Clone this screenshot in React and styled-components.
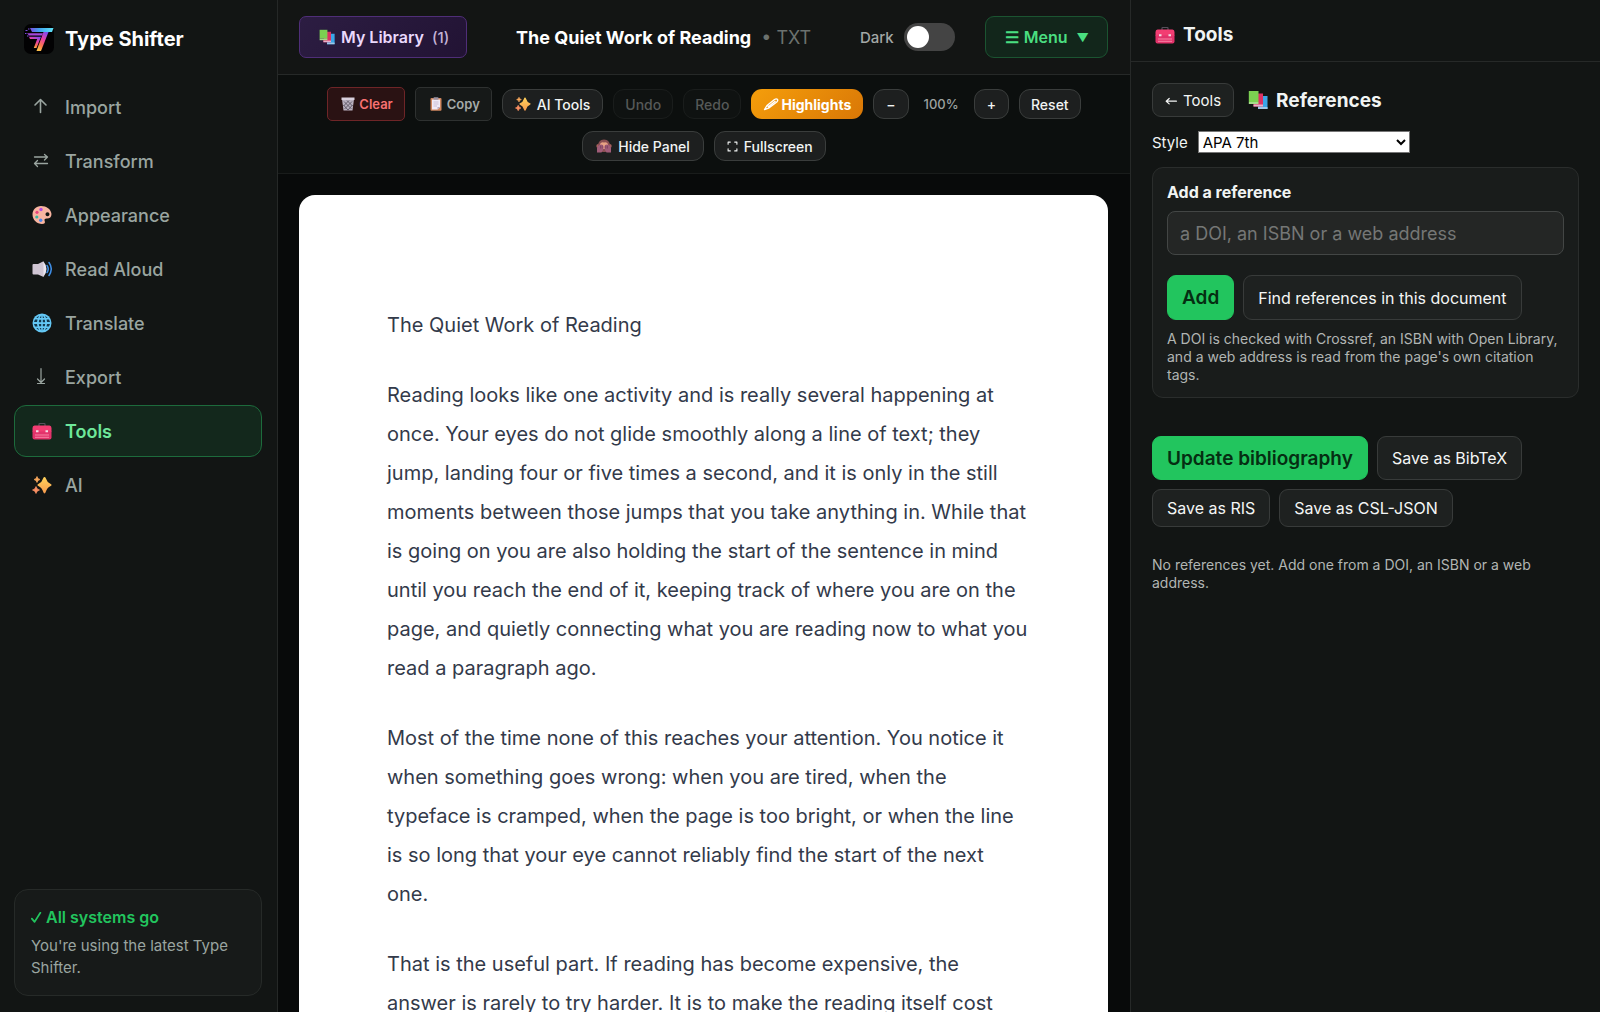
import React, { useState } from 'react';
import styled, { createGlobalStyle, css } from 'styled-components';

const GlobalStyle = createGlobalStyle`
  * {
    box-sizing: border-box;
  }
  body {
    margin: 0;
    background: #080a0a;
    color: #f1f4f3;
    font-family: Inter, "Liberation Sans", sans-serif;
  }
  button, input, select {
    font-family: inherit;
  }
  button {
    cursor: pointer;
  }
`;

const Shell = styled.div`
  display: grid;
  grid-template-columns: 278px minmax(0, 1fr) 470px;
  height: 100vh;
`;

const Svg = styled.svg`
  display: block;
  flex: none;
  width: ${(props) => props.$size || 20}px;
  height: ${(props) => props.$size || 20}px;
`;

/* Sidebar */

const Sidebar = styled.aside`
  display: flex;
  flex-direction: column;
  padding: 24px 15px 16px 14px;
  background: #121514;
  border-right: 1px solid #252827;
`;

const Brand = styled.div`
  display: flex;
  align-items: center;
  gap: 11px;
  padding-left: 10px;
  height: 30px;
  font-size: 20px;
  font-weight: 700;
  color: #ffffff;
`;

const Nav = styled.nav`
  display: flex;
  flex-direction: column;
  gap: 2px;
  margin-top: 27px;
`;

const NavLink = styled.a`
  display: flex;
  align-items: center;
  gap: 13px;
  height: 52px;
  padding: 0 17px;
  border: 1px solid ${(props) => (props.$active ? '#1d6b3c' : 'transparent')};
  border-radius: 12px;
  background: ${(props) => (props.$active ? '#13281c' : 'transparent')};
  color: ${(props) => (props.$active ? '#6ee79a' : '#9aa5a0')};
  font-size: 18px;
  font-weight: ${(props) => (props.$active ? 600 : 500)};
  text-decoration: none;
`;

const Status = styled.div`
  margin-top: auto;
  padding: 16px;
  border: 1px solid #262a28;
  border-radius: 14px;
  background: #171a19;
`;

const StatusTitle = styled.div`
  display: flex;
  align-items: center;
  gap: 4px;
  height: 22px;
  margin-bottom: 7px;
  color: #22c55e;
  font-size: 16px;
  font-weight: 600;
`;

const StatusText = styled.div`
  color: #9aa5a0;
  font-size: 15px;
  line-height: 22px;
`;

/* Reader column */

const Main = styled.main`
  display: flex;
  flex-direction: column;
  min-height: 0;
`;

const Header = styled.header`
  display: flex;
  align-items: center;
  justify-content: space-between;
  height: 75px;
  padding: 0 22px 0 21px;
  background: #131514;
  border-bottom: 1px solid #262928;
`;

const LibraryButton = styled.button`
  display: flex;
  align-items: center;
  gap: 6px;
  height: 42px;
  padding: 0 17px 0 19px;
  border: 1px solid #4f2e78;
  border-radius: 7px;
  background: linear-gradient(135deg, #2c1d42, #221334);
  color: #ead9fd;
  font-size: 16px;
  font-weight: 600;
`;

const Count = styled.span`
  margin-left: 2px;
  color: #c3b2d6;
  font-size: 15px;
  font-weight: 500;
`;

const DocTitle = styled.h1`
  display: flex;
  align-items: center;
  gap: 10px;
  margin: 0;
  color: #ffffff;
  font-size: 18px;
  font-weight: 700;
  white-space: nowrap;
`;

const FileType = styled.span`
  color: #6b716e;
  font-weight: 400;
`;

const HeaderEnd = styled.div`
  display: flex;
  align-items: center;
  gap: 30px;
`;

const ThemeLabel = styled.label`
  display: flex;
  align-items: center;
  gap: 10px;
  color: #a3a8a6;
  font-size: 15px;
  font-weight: 500;
`;

const Switch = styled.input`
  appearance: none;
  display: flex;
  align-items: center;
  justify-content: ${(props) => (props.checked ? 'flex-end' : 'flex-start')};
  width: 51px;
  height: 28px;
  margin: 0;
  padding: 0 3px;
  border-radius: 14px;
  background: #444444;
  cursor: pointer;
  &::before {
    content: '';
    width: 22px;
    height: 22px;
    border-radius: 50%;
    background: #ffffff;
  }
`;

const MenuButton = styled.button`
  display: flex;
  align-items: center;
  gap: 5px;
  height: 42px;
  padding: 0 18px 0 19px;
  border: 1px solid #1b5431;
  border-radius: 9px;
  background: #12261b;
  color: #4ade80;
  font-size: 16px;
  font-weight: 600;
`;

const Caret = styled.span`
  margin-left: 4px;
  font-size: 12px;
`;

const Toolbar = styled.div`
  display: flex;
  flex-wrap: wrap;
  align-items: center;
  justify-content: center;
  gap: 10px;
  padding: 12px 21px;
  background: #0c0f0e;
  border-bottom: 1px solid #191c1b;
`;

const ToolButton = styled.button`
  display: flex;
  align-items: center;
  gap: 6px;
  height: 30px;
  padding: 0 ${(props) => props.$pad || 11}px;
  border: 1px solid #3a3d3c;
  border-radius: 11px;
  background: #1d1f1f;
  color: #f1f4f3;
  font-size: 14px;
  font-weight: 500;
  &:disabled {
    border-color: #1a1d1c;
    background: #0f1211;
    color: #565958;
  }
  ${(props) => props.$kind === 'highlight' && css`
    gap: 2px;
    border-color: transparent;
    background: linear-gradient(135deg, #f59e0b, #d97706) border-box;
    color: #ffffff;
    font-weight: 700;
  `}
`;

const FileButton = styled.button`
  display: flex;
  align-items: center;
  gap: 4px;
  height: 34px;
  padding: 0 11px 0 13px;
  border: 1px solid ${(props) => (props.$danger ? '#6e2527' : '#2e3130')};
  border-radius: 5px;
  background: ${(props) => (props.$danger ? '#2a1213' : '#161918')};
  color: ${(props) => (props.$danger ? '#f87171' : '#a5aaa8')};
  font-size: 13px;
  font-weight: 600;
`;

const Zoom = styled.output`
  width: 45px;
  color: #9da2a0;
  font-size: 13px;
  font-weight: 500;
  text-align: center;
`;

const Scroll = styled.div`
  flex: 1;
  min-height: 0;
  overflow-y: auto;
  padding: 21px 22px 21px 21px;
  scrollbar-width: none;
`;

const Page = styled.article`
  padding: 111px 79px 88px 88px;
  border-radius: 16px;
  background: #ffffff;
  color: #333a4a;
  font-size: 20px;
  line-height: 39px;
`;

const Paragraph = styled.p`
  margin: 0 0 31px;
`;

/* Tools panel */

const Panel = styled.aside`
  background: #121514;
  border-left: 1px solid #262928;
`;

const PanelHeader = styled.div`
  display: flex;
  align-items: center;
  height: 62px;
  padding: 8px 24px 0;
  border-bottom: 1px solid #262928;
`;

const Heading = styled.h2`
  display: flex;
  align-items: center;
  gap: 8px;
  margin: 0;
  font-size: 19px;
  font-weight: 700;
`;

const PanelBody = styled.div`
  padding: 21px;
`;

const Row = styled.div`
  display: flex;
  flex-wrap: wrap;
  align-items: center;
  gap: ${(props) => props.$gap || 9}px;
`;

const Button = styled.button`
  display: flex;
  align-items: center;
  gap: 6px;
  min-height: ${(props) => props.$height || 38}px;
  padding: 0 14px;
  border: 1px solid #383b3a;
  border-radius: 9px;
  background: #1e2120;
  color: #f4f6f5;
  font-size: 16px;
  ${(props) => props.$primary && css`
    border-color: #22c55e;
    background: #22c55e;
    color: #052e12;
    font-size: 19px;
    font-weight: 600;
  `}
`;

const BackButton = styled(Button)`
  min-height: 34px;
  padding: 0 12px;
  font-size: 15px;
`;

const StyleRow = styled.div`
  display: flex;
  align-items: center;
  gap: 10px;
  margin: 14px 0;
  font-size: 15px;
`;

const Select = styled.select`
  width: 212px;
  height: 22px;
  border: 1px solid #767676;
  background: #ffffff;
  color: #000000;
  font-size: 15px;
`;

const Card = styled.section`
  padding: 14px 14px 13px;
  border: 1px solid #2a2d2c;
  border-radius: 11px;
  background: #191c1b;
`;

const CardLabel = styled.label`
  display: block;
  font-size: 16px;
  font-weight: 700;
  line-height: 20px;
`;

const TextInput = styled.input`
  display: block;
  width: 100%;
  height: 44px;
  margin: 9px 0 20px;
  padding: 0 12px;
  border: 1px solid #434645;
  border-radius: 8px;
  background: #242625;
  color: #f1f4f3;
  font-size: 18px;
  &::placeholder {
    color: #757776;
  }
`;

const Hint = styled.p`
  margin: ${(props) => props.$top}px 0 0;
  color: #b1b5b3;
  font-size: 14px;
  line-height: 18px;
`;

const Actions = styled(Row)`
  margin-top: 38px;
`;

/* Icons */

const LogoIcon = () => (
  <Svg $size={30} viewBox="0 0 30 30">
    <defs>
      <linearGradient id="logoTop" x1="0" y1="0" x2="1" y2="0">
        <stop offset="0" stopColor="#7a4be0" />
        <stop offset=".4" stopColor="#3fa4ee" />
        <stop offset="1" stopColor="#5fe3f5" />
      </linearGradient>
      <linearGradient id="logoStem" x1=".8" y1="0" x2=".3" y2="1">
        <stop offset="0" stopColor="#7b4df0" />
        <stop offset=".4" stopColor="#e83fa5" />
        <stop offset=".75" stopColor="#fb7a4c" />
        <stop offset="1" stopColor="#fdc04a" />
      </linearGradient>
    </defs>
    <rect width="30" height="30" rx="7" fill="#020203" />
    <path d="M6 4H29.500L28 8H8Z" fill="url(#logoTop)" />
    <path d="M3 9.200H19L18 11.500H5Z" fill="#a548dc" />
    <path d="M19.500 8H24.500L17 27H12.500Z" fill="url(#logoStem)" />
    <path d="M5 12.800H17L12.500 24H9.800L13.200 15H6Z" fill="url(#logoStem)" />
    <path d="M1.500 6h2v1h-2zM4 4.500h1.500v1H4zM1 9h1.500v1H1zM3 11.500h1.500v1H3z" fill="#7a4be0" />
  </Svg>
);

const Stroke = ({ size, d, width = 2 }) => (
  <Svg $size={size} viewBox="0 0 20 20" fill="none" stroke="currentColor" strokeWidth={width} strokeLinecap="round" strokeLinejoin="round">
    <path d={d} />
  </Svg>
);

const ImportIcon = () => <Stroke width={1.6} d="M8.500 15.500V2.500M3 8L8.500 2.500L14 8" />;
const TransformIcon = () => <Stroke width={1.3} d="M2.500 6H15.500M12.500 3.500L15.500 6L12.500 9M15.500 12.500H2.500M5.500 9.500L2.500 12.500L5.500 15.500" />;
const ExportIcon = () => <Stroke width={1.2} d="M9 1.500V15.500M5.500 12L9 15.500L12.500 12M5.500 16.500H12.500" />;
const BackIcon = () => <Stroke size={12} width={2} d="M19 12H2M7 7.500L2 12L7 16.500" />;
const CheckIcon = () => <Stroke size={11} width={3.2} d="M1.500 12L6.500 18L17 1.500" />;
const FullscreenIcon = () => <Stroke size={11} width={2} d="M2 6V2H6M14 2H18V6M18 14V18H14M6 18H2V14" />;

const PaletteIcon = () => (
  <Svg viewBox="0 0 20 20">
    <path fillRule="evenodd" d="M9 1C4 1 .5 5 .5 9.500C.5 15 5 19 10 19C12.500 19 13.500 17.700 12.700 16C12 14.500 12.800 13.600 14.500 13.600C17.500 13.800 19.500 12.200 19.500 9C19 4 14.500 1 9 1ZM15.500 7.300A2 2 0 1 1 15.490 7.300Z" fill="#f8b4a0" />
    <circle cx="9" cy="4.500" r="1.700" fill="#b14be0" />
    <circle cx="5" cy="7.300" r="1.600" fill="#e8457d" />
    <circle cx="4.800" cy="12" r="1.600" fill="#38b6a2" />
    <circle cx="8.700" cy="15.300" r="1.700" fill="#4d87ea" />
  </Svg>
);

const SpeakerIcon = () => (
  <Svg viewBox="0 0 20 20">
    <path d="M1.500 5H6L11 2.500Q12 2 12 3.500V16.500Q12 18.500 10.500 17.500L6 15.500H1.500Q.5 15.500 .5 14.500V6Q.5 5 1.500 5Z" fill="#cfc5d3" />
    <path d="M11.500 2.500Q14.500 6 14.500 10T11.500 17.800Z" fill="#ece6ef" />
    <path d="M15 6.500Q17.500 10 15 13.500M17 3.500Q21.500 10 17 16.500" fill="none" stroke="#3f8fe8" strokeWidth="1.500" strokeLinecap="round" />
  </Svg>
);

const GlobeIcon = () => (
  <Svg viewBox="0 0 20 20">
    <circle cx="10" cy="10" r="9.500" fill="#64c8f5" />
    <path d="M3 6.500h2.500L5 9H2zM7.200 6.700h2v2.500H6.800zM10.800 6.700h2l.4 2.500h-2.400zM14.600 6.500H17L18 9h-3zM2 11h3l.5 2.500H3zM6.800 10.900h2.400v2.400h-2zM10.800 10.900h2.400l-.4 2.400h-2zM15 11h3l-1 2.500h-2.500zM7.700 5L9.200 2.500V5zM10.800 2.500L12.300 5h-1.500zM7.700 15h1.500v2.500zM10.800 15h1.500l-1.500 2.500zM4.300 4.700L7 2.700L6 5zM15.700 4.700L13 2.700L14 5zM4.300 15.300L7 17.300L6 15zM15.700 15.300L13 17.300L14 15z" fill="#14384e" />
  </Svg>
);

const ToolboxIcon = () => (
  <Svg viewBox="0 0 20 20">
    <path d="M7 5V3.200Q7 2.500 7.700 2.500H12.300Q13 2.500 13 3.200V5" fill="none" stroke="#57505c" strokeWidth="1.200" />
    <path d="M2.500 4.500H17.500Q19.500 4.500 19.500 7V11H.5V7Q.5 4.500 2.500 4.500Z" fill="#f23d72" />
    <path d="M.5 10.500H19.500V16.500Q19.500 18.500 17.500 18.500H2.500Q.5 18.500 .5 16.500Z" fill="#e2336b" />
    <path d="M4 9.200h2.500v2H4zM13.500 9.200H16v2h-2.500z" fill="#f2dce6" />
    <path d="M3 14H17M3 16.300H17" stroke="#f98cab" strokeWidth=".9" />
  </Svg>
);

const SparklesIcon = ({ size }) => (
  <Svg $size={size} viewBox="0 0 20 20">
    <defs>
      <linearGradient id="spark" x1="0" y1="0" x2="0" y2="1">
        <stop offset="0" stopColor="#ffd35a" />
        <stop offset="1" stopColor="#f79a4e" />
      </linearGradient>
    </defs>
    <path d="M12.500 2Q13.300 2 13.800 3.300Q15 7.400 18.700 9.100Q20.500 10 18.700 10.900Q15 12.500 13.800 16.800Q13.300 18.500 12.500 18.500T11.200 16.800Q10 12.500 6.300 10.900Q4.500 10 6.300 9.100Q10 7.400 11.200 3.300Q11.700 2 12.500 2Z" fill="url(#spark)" />
    <path d="M5 1.500Q5.500 4 8 4.500Q5.500 5 5 7.500Q4.500 5 2 4.500Q4.500 4 5 1.500Z" fill="#f9a85c" stroke="#f9a85c" strokeWidth=".7" />
    <path d="M4 11.500Q4.600 14.300 7.500 15Q4.600 15.700 4 18.500Q3.400 15.700 .5 15Q3.400 14.300 4 11.500Z" fill="#f98f63" stroke="#f98f63" strokeWidth=".7" />
  </Svg>
);

const BooksIcon = ({ size }) => (
  <Svg $size={size} viewBox="0 0 20 20">
    <path d="M12.500 6H19.500V19H10V16Z" fill="#3aa5e8" />
    <path d="M10 17H19.500V19H10Z" fill="#9fc8e8" />
    <path d="M9 3.500H15V16.500H5.500V14Z" fill="#dc3163" />
    <path d="M5.500 14.500H15V16.500H5.500Z" fill="#e7b2cb" />
    <path d="M.8 1H10.500V12H.8Z" fill="#7bd151" />
    <path d="M.8 12H10.500V14H.8Z" fill="#a4dc8b" />
  </Svg>
);

const BinIcon = () => (
  <Svg $size={14} viewBox="0 0 14 14">
    <path d="M1 2H13L11.500 13.500H2.500Z" fill="#b9b0bf" />
    <path d="M3 4.500L10.500 12M6 3.500L11.500 9M2.500 8L7 13M11 4.500L3.500 12M8 3.500L2.500 9M11.500 8L7 13" stroke="#514a58" strokeWidth=".8" />
    <path d="M.5 .5H13.500V3H.5Z" fill="#d8d0dd" />
  </Svg>
);

const ClipboardIcon = () => (
  <Svg $size={14} viewBox="0 0 14 14">
    <rect x="1.500" y="1" width="11" height="12.800" rx="1" fill="#d0875f" />
    <path d="M3 2.500H11V10L8.500 12.500H3Z" fill="#f1ebf6" />
    <path d="M11 10H8.500V12.500Z" fill="#b5a9c4" />
    <rect x="4.500" y=".2" width="5" height="2.500" rx=".8" fill="#9a92a3" />
    <path d="M4.500 5H9.500M4.500 7H9.500M4.500 9H8" stroke="#b9adc9" strokeWidth=".7" />
  </Svg>
);

const MonkeyIcon = () => (
  <Svg $size={16} viewBox="0 0 16 16">
    <circle cx="2.300" cy="8" r="2" fill="#a8615b" />
    <circle cx="13.700" cy="8" r="2" fill="#a8615b" />
    <path d="M8 1.500C3.800 1.500 2 4.500 2 8C2 12 5 14 8 14S14 12 14 8C14 4.500 12.200 1.500 8 1.500Z" fill="#8a4f52" />
    <path d="M4 6Q5.500 3.500 8 4.500Q10.500 3.500 12 6V11H4Z" fill="#e8a284" />
    <path d="M1 14.500V10Q2 6.500 5 6.500Q7.700 6.500 7.600 9.500Q7.500 12.500 5.500 14.500ZM15 14.500V10Q14 6.500 11 6.500Q8.300 6.500 8.400 9.500Q8.500 12.500 10.500 14.500Z" fill="#a05c78" />
    <path d="M4.500 7.500V10.500M6.200 7.500V10.500M9.800 7.500V10.500M11.500 7.500V10.500" stroke="#6f3858" strokeWidth=".6" />
  </Svg>
);

const CrayonIcon = () => (
  <Svg $size={16} viewBox="0 0 16 16" fill="none" stroke="currentColor" strokeWidth="1.400" strokeLinejoin="round">
    <path d="M1.500 13.500L4 9.500L11.500 3.500Q13.500 2.300 14.500 3.500Q15.200 4.700 13.800 6L6.200 11.800ZM4 9.500Q5.700 9.800 6.200 11.800M6 10.300L12.500 5" />
  </Svg>
);

const links = [
  { label: 'Import', Icon: ImportIcon },
  { label: 'Transform', Icon: TransformIcon },
  { label: 'Appearance', Icon: PaletteIcon },
  { label: 'Read Aloud', Icon: SpeakerIcon },
  { label: 'Translate', Icon: GlobeIcon },
  { label: 'Export', Icon: ExportIcon },
  { label: 'Tools', Icon: ToolboxIcon },
  { label: 'AI', Icon: SparklesIcon },
];

const paragraphs = [
  'The Quiet Work of Reading',
  'Reading looks like one activity and is really several happening at once. Your eyes do not glide smoothly along a line of text; they jump, landing four or five times a second, and it is only in the still moments between those jumps that you take anything in. While that is going on you are also holding the start of the sentence in mind until you reach the end of it, keeping track of where you are on the page, and quietly connecting what you are reading now to what you read a paragraph ago.',
  'Most of the time none of this reaches your attention. You notice it when something goes wrong: when you are tired, when the typeface is cramped, when the page is too bright, or when the line is so long that your eye cannot reliably find the start of the next one.',
  'That is the useful part. If reading has become expensive, the answer is rarely to try harder. It is to make the reading itself cost less.',
];

const App = () => {
  const [active, setActive] = useState('Tools');
  const [light, setLight] = useState(false);
  const [zoom, setZoom] = useState(100);
  const [source, setSource] = useState('');

  return (
    <>
      <GlobalStyle />
      <Shell>
        <Sidebar>
          <Brand>
            <LogoIcon />
            Type Shifter
          </Brand>
          <Nav>
            {links.map(({ label, Icon }) => (
              <NavLink key={label} href={`#${label}`} $active={label === active} onClick={() => setActive(label)}>
                <Icon />
                {label}
              </NavLink>
            ))}
          </Nav>
          <Status>
            <StatusTitle><CheckIcon />All systems go</StatusTitle>
            <StatusText>You're using the latest Type Shifter.</StatusText>
          </Status>
        </Sidebar>

        <Main>
          <Header>
            <LibraryButton type="button">
              <BooksIcon size={16} />
              My Library
              <Count>(1)</Count>
            </LibraryButton>
            <DocTitle>
              The Quiet Work of Reading
              <FileType>• TXT</FileType>
            </DocTitle>
            <HeaderEnd>
              <ThemeLabel>
                Dark
                <Switch type="checkbox" checked={light} onChange={(e) => setLight(e.target.checked)} />
              </ThemeLabel>
              <MenuButton type="button">
                <span>☰</span>
                <span>Menu</span>
                <Caret>▼</Caret>
              </MenuButton>
            </HeaderEnd>
          </Header>

          <Toolbar>
            <FileButton type="button" $danger><BinIcon />Clear</FileButton>
            <FileButton type="button"><ClipboardIcon />Copy</FileButton>
            <ToolButton type="button" $pad={12}><SparklesIcon size={16} />AI Tools</ToolButton>
            <ToolButton type="button" disabled>Undo</ToolButton>
            <ToolButton type="button" disabled>Redo</ToolButton>
            <ToolButton type="button" $kind="highlight"><CrayonIcon />Highlights</ToolButton>
            <ToolButton type="button" $pad={12} aria-label="Zoom out" onClick={() => setZoom(zoom - 10)}>−</ToolButton>
            <Zoom>{zoom}%</Zoom>
            <ToolButton type="button" $pad={12} aria-label="Zoom in" onClick={() => setZoom(zoom + 10)}>+</ToolButton>
            <ToolButton type="button" onClick={() => setZoom(100)}>Reset</ToolButton>
            <ToolButton type="button" $pad={13}><MonkeyIcon />Hide Panel</ToolButton>
            <ToolButton type="button" $pad={12}><FullscreenIcon />Fullscreen</ToolButton>
          </Toolbar>

          <Scroll>
            <Page>
              {paragraphs.map((text) => (
                <Paragraph key={text}>{text}</Paragraph>
              ))}
            </Page>
          </Scroll>
        </Main>

        <Panel>
          <PanelHeader>
            <Heading><ToolboxIcon />Tools</Heading>
          </PanelHeader>
          <PanelBody>
            <Row $gap={14}>
              <BackButton type="button"><BackIcon />Tools</BackButton>
              <Heading><BooksIcon />References</Heading>
            </Row>
            <StyleRow>
              <label htmlFor="citation-style">Style</label>
              <Select id="citation-style" defaultValue="apa">
                <option value="apa">APA 7th</option>
                <option value="mla">MLA 9th</option>
                <option value="chicago">Chicago 17th</option>
              </Select>
            </StyleRow>
            <Card>
              <CardLabel htmlFor="reference-source">Add a reference</CardLabel>
              <TextInput
                id="reference-source"
                type="text"
                placeholder="a DOI, an ISBN or a web address"
                value={source}
                onChange={(e) => setSource(e.target.value)}
              />
              <Row>
                <Button type="button" $primary $height={45}>Add</Button>
                <Button type="button" $height={45}>Find references in this document</Button>
              </Row>
              <Hint $top={10}>
                A DOI is checked with Crossref, an ISBN with Open Library, and a web address is read from the page's own citation tags.
              </Hint>
            </Card>
            <Actions>
              <Button type="button" $primary $height={44}>Update bibliography</Button>
              <Button type="button" $height={44}>Save as BibTeX</Button>
              <Button type="button">Save as RIS</Button>
              <Button type="button">Save as CSL-JSON</Button>
            </Actions>
            <Hint $top={29}>No references yet. Add one from a DOI, an ISBN or a web address.</Hint>
          </PanelBody>
        </Panel>
      </Shell>
    </>
  );
};

export default App;
